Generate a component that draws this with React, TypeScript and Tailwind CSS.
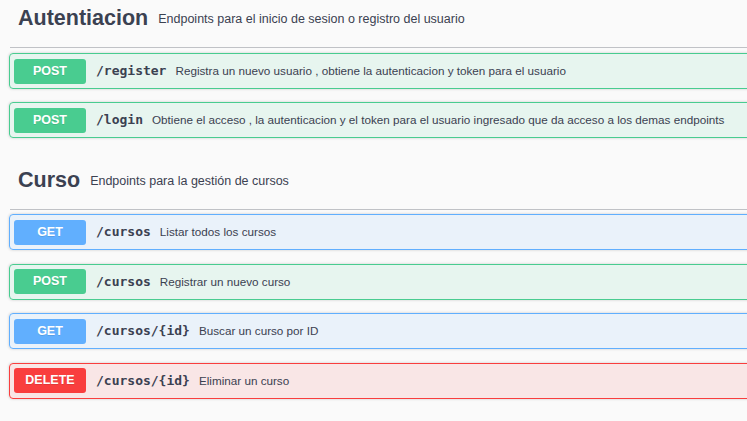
import React from "react";

type Method = "GET" | "POST" | "DELETE";

const rowStyles: Record<Method, { row: string; badge: string }> = {
  POST: {
    row: "border-[#49cc90] bg-[rgba(73,204,144,0.1)]",
    badge: "bg-[#49cc90]",
  },
  GET: {
    row: "border-[#61affe] bg-[rgba(97,175,254,0.1)]",
    badge: "bg-[#61affe]",
  },
  DELETE: {
    row: "border-[#f93e3e] bg-[rgba(249,62,62,0.1)]",
    badge: "bg-[#f93e3e]",
  },
};

function Row({ method, path, desc }: { method: Method; path: string; desc: string }) {
  const s = rowStyles[method];
  return (
    <div
      className={`ml-[9px] mr-[-40px] h-[36px] flex items-center border rounded-[4px] shadow-[0_0_3px_rgba(0,0,0,0.19)] ${s.row}`}
    >
      <div
        className={`ml-[4px] w-[72px] h-[25px] rounded-[3px] flex items-center justify-center text-white font-bold text-[12.5px] [text-shadow:0_1px_0_rgba(0,0,0,0.1)] ${s.badge}`}
        style={{ fontFamily: '"Liberation Sans", Arial, sans-serif' }}
      >
        {method}
      </div>
      <span
        className="ml-[10px] text-[13px] font-bold text-[#3b4151] whitespace-nowrap"
        style={{ fontFamily: '"DejaVu Sans Mono", monospace' }}
      >
        {path}
      </span>
      <span className="ml-[9px] text-[11.7px] text-[#3b4151] whitespace-nowrap">{desc}</span>
    </div>
  );
}

function Heading({ title, desc }: { title: string; desc: string }) {
  return (
    <div className="ml-[10px] pl-[8px] pt-[6px] h-[48px] border-b border-[rgba(59,65,81,0.3)] flex items-start">
      <div className="flex items-center gap-[10px]">
        <span className="text-[21.5px] leading-[25px] font-bold text-[#3b4151]">{title}</span>
        <span className="text-[12.5px] leading-[16px] text-[#3b4151]">{desc}</span>
      </div>
    </div>
  );
}

export default function App() {
  return (
    <div
      className="w-[747px] h-[421px] overflow-hidden bg-[#fafafa]"
      style={{ fontFamily: '"Liberation Sans", Arial, sans-serif' }}
    >
      <Heading title="Autentiacion" desc="Endpoints para el inicio de sesion o registro del usuario" />
      <div className="mt-[5px] flex flex-col gap-[13px]">
        <Row
          method="POST"
          path="/register"
          desc="Registra un nuevo usuario , obtiene la autenticacion y token para el usuario"
        />
        <Row
          method="POST"
          path="/login"
          desc="Obtiene el acceso , la autenticacion y el token para el usuario ingresado que da acceso a los demas endpoints"
        />
      </div>
      <div className="mt-[24px]">
        <Heading title="Curso" desc="Endpoints para la gestión de cursos" />
      </div>
      <div className="mt-[4px] flex flex-col gap-[13.5px]">
        <Row method="GET" path="/cursos" desc="Listar todos los cursos" />
        <Row method="POST" path="/cursos" desc="Registrar un nuevo curso" />
        <Row method="GET" path="/cursos/{id}" desc="Buscar un curso por ID" />
        <Row method="DELETE" path="/cursos/{id}" desc="Eliminar un curso" />
      </div>
    </div>
  );
}
